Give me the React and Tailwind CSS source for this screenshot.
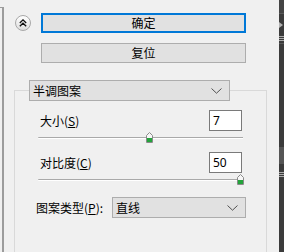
import React from "react";

const Chev = () => (
  <svg width="11" height="6" viewBox="0 0 11 6">
    <path d="M0.5 0.5 L5.5 5.2 L10.5 0.5" fill="none" stroke="#505050" strokeWidth="1" />
  </svg>
);

const Thumb = () => (
  <svg width="7" height="11" viewBox="0 0 7 11">
    <path d="M3.5 0.5 L6.5 3.5 L6.5 10.5 L0.5 10.5 L0.5 3.5 Z" fill="#f6f6f6" stroke="#8a8a8a" />
    <rect x="1" y="6" width="5" height="4" fill="#23a33b" />
  </svg>
);

function Slider({ thumbCls }) {
  return (
    <div className="relative h-[14px] w-[205px] -ml-[2px]">
      <div className="absolute left-0 right-0 top-[6px] h-[2px] border-t border-[#a9a9a9] bg-white rounded-l-[2px]" />
      <div className={"absolute top-[1px] " + thumbCls}>
        <Thumb />
      </div>
    </div>
  );
}

function Combo({ text, cls }) {
  return (
    <div className={"h-[21px] flex items-center justify-between bg-[#e1e1e1] border border-[#adadad] pl-[3px] pr-[7px] " + cls}>
      <span className="leading-none">{text}</span>
      <Chev />
    </div>
  );
}

function NumRow({ label, value }) {
  return (
    <div className="w-[202px] flex items-center justify-between">
      <span className="leading-none">{label}</span>
      <div className="w-[33px] h-[21px] border border-[#7a7a7a] bg-white flex items-center pl-[3px] font-['Noto_Sans',sans-serif] text-[12px] leading-none">
        {value}
      </div>
    </div>
  );
}

export default function App() {
  return (
    <div className="w-[284px] h-[252px] overflow-hidden flex bg-[#f0f0f0] text-black text-[12px] font-['Noto_Sans_CJK_SC',sans-serif]">
      <div className="flex-1 flex flex-col">
        <div className="h-[3px] bg-[#fafafa]" />
        <div className="flex flex-1">
          <div className="w-[4px] mt-[7px] border-t border-r-2 border-[#9c9c9c]" />
          <div className="flex-1 flex flex-col pl-[11px]">
            <div className="mt-[13px] flex items-center">
              <div className="w-[16px] h-[16px] rounded-full border border-[#a8a8a8] bg-gradient-to-b from-white to-[#dedede] flex items-center justify-center">
                <svg width="8" height="8" viewBox="0 0 8 8">
                  <path d="M0.8 4 L4 0.9 L7.2 4 M0.8 7.3 L4 4.2 L7.2 7.3" fill="none" stroke="#111" strokeWidth="1.3" />
                </svg>
              </div>
              <div className="ml-[10px] w-[205px] h-[20px] border-2 border-[#0078d7] bg-[#e1e1e1] flex items-center justify-center leading-none">
                确定
              </div>
            </div>
            <div className="mt-[10px] ml-[26px] w-[205px] h-[20px] border border-[#adadad] bg-[#e1e1e1] flex items-center justify-center leading-none">
              复位
            </div>
            <div className="mt-[27px] -ml-[1px] w-[253px] h-[200px] border-l border-t border-r border-[#d9d9d9] flex flex-col">
              <Combo text="半调图案" cls="-mt-[11px] ml-[14px] w-[201px]" />
              <div className="pl-[25px] flex flex-col">
                <div className="mt-[9px]">
                  <NumRow label={<>大小(<u>S</u>)</>} value="7" />
                </div>
                <Slider thumbCls="left-[108px]" />
                <div className="mt-[7px]">
                  <NumRow label={<>对比度(<u>C</u>)</>} value="50" />
                </div>
                <Slider thumbCls="left-[199px]" />
              </div>
              <div className="mt-[10px] pl-[21px] flex items-center">
                <span className="w-[76px] leading-none">图案类型(<u>P</u>):</span>
                <Combo text="直线" cls="w-[134px]" />
              </div>
            </div>
          </div>
        </div>
      </div>
      <div className="w-[5px] flex flex-col bg-[#3b3b3b]">
        <div className="h-[13px] bg-[#444444]" />
        <div className="h-[1px] bg-[#5a5a5a]" />
        <div className="h-[8px]" />
        <div className="h-[6px] flex items-center">
          <svg width="4" height="6" viewBox="0 0 4 6">
            <path d="M0 0 L4 3 L0 6 Z" fill="#b0b0b0" />
          </svg>
        </div>
        <div className="h-[8px]" />
        <div className="h-[1px] bg-[#aaaaaa]" />
        <div className="h-[1px]" />
        <div className="h-[1px] bg-[#aaaaaa]" />
        <div className="h-[1px]" />
        <div className="h-[1px] bg-[#aaaaaa]" />
        <div className="h-[2px]" />
        <div className="h-[1px] bg-[#5a5a5a]" />
        <div className="h-[103px]" />
        <div className="h-[17px] bg-[#555555]" />
        <div className="h-[8px]" />
        <div className="h-[1px] bg-[#aaaaaa]" />
        <div className="h-[1px]" />
        <div className="h-[1px] bg-[#aaaaaa]" />
        <div className="h-[1px]" />
        <div className="h-[1px] bg-[#aaaaaa]" />
      </div>
    </div>
  );
}
